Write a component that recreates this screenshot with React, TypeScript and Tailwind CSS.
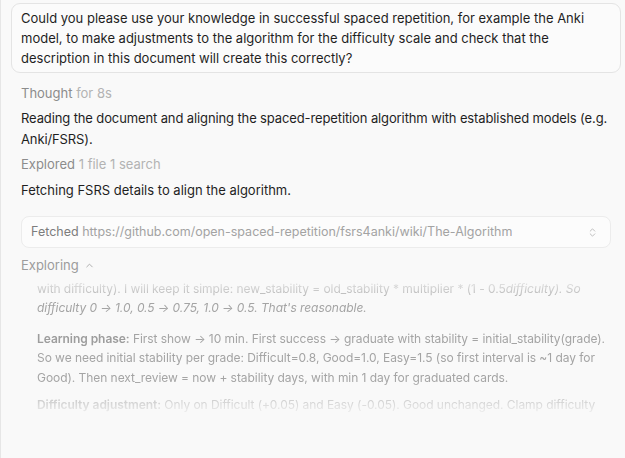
import React from 'react'
import { ChevronsUpDown, ChevronUp } from 'lucide-react'

const font = { fontFamily: 'Inter, "Noto Sans", sans-serif' }

function Label({ strong, light }: { strong: string; light: string }) {
  return (
    <div className="text-[13px] leading-[20px]">
      <span className="text-[#8c8c8c]">{strong}</span>{' '}
      <span className="text-[#b3b3b3]">{light}</span>
    </div>
  )
}

export default function App() {
  return (
    <div
      className="min-h-screen border-l border-[#e6e6e6] bg-[#f9f9f9] pt-[3px] pl-[10px] pr-[4px] antialiased"
      style={font}
    >
      {/* User message */}
      <div className="rounded-[9px] border border-[#e4e4e4] bg-[#fbfbfb] px-[9px] py-[4px] text-[13px] leading-[20px] text-[#1f1f1f]">
        Could you please use your knowledge in successful spaced repetition, for example the Anki
        model, to make adjustments to the algorithm for the difficulty scale and check that the
        description in this document will create this correctly?
      </div>

      <div className="pl-[10px] pr-[8px]">
        <div className="mt-[10px]">
          <Label strong="Thought" light="for 8s" />
        </div>

        <p className="mt-[5px] text-[13px] leading-[21px] tracking-[-0.12px] text-[#1f1f1f]">
          Reading the document and aligning the spaced-repetition algorithm with established models (e.g.
          Anki/FSRS).
        </p>

        <div className="mt-[4px]">
          <Label strong="Explored" light="1 file 1 search" />
        </div>

        <p className="mt-[6px] text-[13px] leading-[20px] text-[#1f1f1f]">
          Fetching FSRS details to align the algorithm.
        </p>

        {/* Fetched tool call */}
        <div className="mt-[16px] mr-[2px] flex h-[32px] items-center justify-between rounded-[8px] border border-[#ececec] bg-[#fcfcfc] pl-[9px] pr-[12px] text-[12.5px]">
          <div className="truncate">
            <span className="text-[#7d7d7d]">Fetched</span>{' '}
            <span className="text-[#a3a3a3]">https://github.com/open-spaced-repetition/fsrs4anki/wiki/The-Algorithm</span>
          </div>
          <ChevronsUpDown className="h-[11px] w-[11px] shrink-0 text-[#a8a8a8]" strokeWidth={1.6} />
        </div>

        {/* Exploring */}
        <div className="mt-[7px] flex items-center gap-[5px] text-[13px] leading-[20px] text-[#9c9c9c]">
          Exploring
          <ChevronUp className="h-[11px] w-[11px] text-[#a8a8a8]" strokeWidth={2} />
        </div>

        <div className="mt-[1px] h-[142px] overflow-hidden pl-[16px] text-[12px] leading-[19.5px] tracking-[-0.05px] text-[#a4a4a4] [mask-image:linear-gradient(to_bottom,transparent_0px,black_26px,black_104px,transparent_142px)]">
          <div className="-mt-[17px]">
            <p>
              Review phase: stability grows by a multiplier per grade that should shrink (scale
              <br />
              with difficulty). I will keep it simple: new_stability = old_stability * multiplier * (1 - 0.5
              <em>
                difficulty). So difficulty 0 → 1.0, 0.5 → 0.75, 1.0 → 0.5. That's reasonable.
              </em>
            </p>
            <p className="mt-[11px]">
              <span className="font-semibold text-[#9d9d9d]">Learning phase:</span> First show → 10 min. First success → graduate
              with stability = initial_stability(grade). So we need initial stability per grade: Difficult=0.8, Good=1.0,
              Easy=1.5 (so first interval is ~1 day for Good). Then next_review = now + stability days, with min 1 day for
              graduated cards.
            </p>
            <p className="mt-[8px]">
              <span className="font-semibold text-[#9d9d9d]">Difficulty adjustment:</span> Only on Difficult (+0.05) and Easy
              (-0.05). Good unchanged. Clamp difficulty to&nbsp;[0,&nbsp;1] after each review so the scale stays bounded.
            </p>
          </div>
        </div>
      </div>
    </div>
  )
}
